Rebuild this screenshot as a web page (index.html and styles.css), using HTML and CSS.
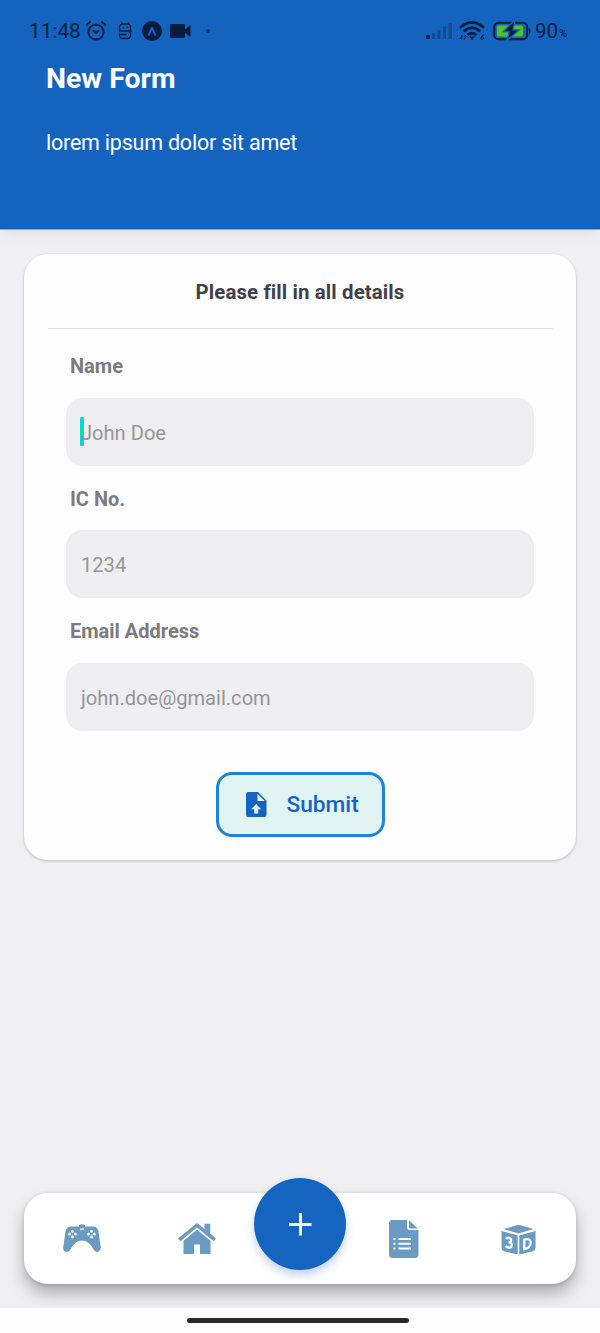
FILE: index.html
```html
<!DOCTYPE html>
<html lang="en">
<head>
<meta charset="utf-8">
<title>New Form</title>
<link rel="stylesheet" href="styles.css">
</head>
<body>
<div class="screen">
  <header class="header">
    <div class="status">
      <div class="status-left">
        <span class="clock">11:48</span>
        <svg class="alarm" width="22" height="22" viewBox="0 0 22 22" fill="none" stroke="currentColor" stroke-width="2"><circle cx="11" cy="12" r="7.6"/><path d="M7.8 10.2l3.2 2.8 3.2-2.8M1.2 5.2l4.3-3.7M20.8 5.2l-4.3-3.7"/></svg>
        <svg class="ess" width="14" height="18" viewBox="0 0 14 18" fill="none" stroke="currentColor" stroke-width="1.300"><path d="M12.500 8V5Q12.500 2 9.500 2h-5Q1.500 2 1.500 5.500T4.500 9h5q3.200 0 3.200 3.700T9 16.500H5Q1.500 16.500 1.300 13.500M1 8.800h12.500M3.500 2V.5M10.500 2V.5M4.800 5.500H6M8.500 5.500h1.200M1 12.500h7.500"/></svg>
        <svg class="expo" width="20" height="20" viewBox="0 0 20 20"><circle cx="10" cy="10" r="10" fill="currentColor"/><path d="M5.600 14.200L9 6.400Q10 5 11 6.400l3.400 7.800q-1.400 1.200-2.200-.4L10 9.600l-2.200 4.200q-.8 1.600-2.200.4z" fill="#1765bf"/></svg>
        <svg class="video" width="21" height="14" viewBox="0 0 21 14" fill="currentColor"><rect width="15" height="14" rx="1"/><path d="M14 6l6.500-5v12L14 8z"/></svg>
        <span class="dot"></span>
      </div>
      <div class="status-right">
        <svg class="signal" width="27" height="18" viewBox="0 0 27 18"><rect y="13" width="4" height="4" rx="1" fill="#09254b"/><path d="M6 11h3v6H6zM11.500 8h3v9h-3zM17 4.500h3V17h-3zM22.500 1h3.500v16h-3.500z" fill="#124b91"/></svg>
        <svg class="wifi" width="26" height="20" viewBox="0 0 26 20" fill="none" stroke="currentColor" stroke-width="2.500"><path d="M1 6.700Q13-4 25 6.700M4.800 10.500Q13 3.100 21.200 10.500M8.500 14q4.500-3.800 9 0"/><path d="M10.300 15.500h5.400L13 19z" fill="currentColor" stroke="none"/><path d="M2.800 14v4.500M1 16.800l1.800 1.700M6 18.500V14M6 14l1.800 1.700M24.500 14.200q-2.500.3-2.500 2.800v1.200h2.300v-2H22" stroke-width="1"/></svg>
        <svg class="battery" width="38" height="20" viewBox="0 0 38 20"><rect x="1.200" y="1.700" width="33" height="16.600" rx="4.500" fill="none" stroke="currentColor" stroke-width="2"/><rect x="4" y="4.500" width="26" height="11" rx="1.500" fill="#52c41b"/><path d="M35.800 7q1.700 0 1.700 3t-1.700 3z" fill="currentColor"/><path d="M20.500.5L10 10.800h6.200L14 19.500 26.500 8.800h-6.500L22 .5z" fill="currentColor" stroke="#1765bf" stroke-width="1.300"/></svg>
        <span class="level">90</span><span class="percent">%</span>
      </div>
    </div>
    <h1 class="title">New Form</h1>
    <p class="subtitle">lorem ipsum dolor sit amet</p>
  </header>
  <main class="content">
    <form class="card">
      <h2 class="card-title">Please fill in all details</h2>
      <div class="fields">
        <div class="label">Name</div>
        <div class="field focused"><span class="hint">John Doe</span></div>
        <div class="label">IC No.</div>
        <div class="field"><span class="hint">1234</span></div>
        <div class="label">Email Address</div>
        <div class="field"><span class="hint">john.doe@gmail.com</span></div>
      </div>
      <button class="submit" type="button">
        <svg width="21" height="25" viewBox="0 0 21 25"><path d="M2.500 0H12l8.500 8.500V22.500a2.500 2.500 0 0 1-2.500 2.500H2.500A2.500 2.500 0 0 1 0 22.500V2.500A2.500 2.500 0 0 1 2.500 0z" fill="#1565c0"/><path d="M11.500 1.700v7.200h7.200zM10.200 12l5 5.200h-3v4.300h-4v-4.300h-3z" fill="#e2f3f4"/></svg>
        <span class="submit-text">Submit</span>
      </button>
    </form>
  </main>
  <div class="nav-area">
    <nav class="nav">
      <svg class="game" width="38" height="29" viewBox="0 0 38 29"><path d="M8 2.500h8V1q3-1.500 6 0v1.500h8q4.500 0 5.500 5l2.200 15.500q.5 4-2.500 4.800-3 .7-4.700-2.300Q26 16.500 19 16.500T7.500 25.500Q5.800 28.500 2.800 27.800-.2 27 .3 23L2.500 7.500Q3.500 2.500 8 2.500z" fill="#6b9ac2"/><g fill="#fff"><circle cx="9.500" cy="7.500" r="1.400"/><circle cx="9.500" cy="13" r="1.400"/><circle cx="6.700" cy="10.200" r="1.400"/><circle cx="12.300" cy="10.200" r="1.400"/><circle cx="28.500" cy="7.500" r="1.400"/><circle cx="28.500" cy="13" r="1.400"/><circle cx="25.700" cy="10.200" r="1.400"/><circle cx="31.300" cy="10.200" r="1.400"/><path d="M17 4.500h4v1.200h-4z"/></g></svg>
      <svg class="home" width="38" height="32" viewBox="0 0 38 32" fill="#6b9ac2"><path d="M0 15.500L19 0l7.500 6V.8h5.800v9.900l5.700 4.800-2.300 2.700L19 4.500 2.300 18.200z"/><path d="M19 6.800l13.500 11V31H22V21.500h-6V31H5.500V17.800z"/></svg>
      <div class="fab"><svg width="24" height="24" viewBox="0 0 24 24"><path d="M12.500 1v22.500M1 12.500h22.500" stroke="#fff" stroke-width="3"/></svg></div>
      <svg class="doc" width="30" height="38" viewBox="0 0 30 38"><path d="M3.500 0H18v7.500Q18 10 20.500 10H29.500V34.500a3.500 3.500 0 0 1-3.500 3.500H3.500A3.500 3.500 0 0 1 0 34.500v-31A3.500 3.500 0 0 1 3.500 0zM20 .3L28.800 8.500H21Q20 8.500 20 7.500z" fill="#6b9ac2"/><path d="M9.500 19H22M9.500 23.700H22M9.500 28.500H22M4.500 19h2M4.500 23.700h2M4.500 28.500h2" stroke="#fff" stroke-width="2"/></svg>
      <svg class="cube" width="35" height="31" viewBox="0 0 35 31"><path d="M17.500.7L32.500 5 17.500 9.500 2.500 5zM.5 7L16.700 11.500V30.500L3 27.200Q.5 26.500.5 24zM34.500 7L18.300 11.500V30.500L32 27.200Q34.500 26.500 34.500 24z" fill="#6b9ac2"/><g fill="none" stroke="#fff" stroke-width="2.300"><path d="M5 15Q6.500 13 8.800 14q2.800 2 0 4.500H7.500M8.800 18.500q3.500 1.500 1.300 4.500-2.300 1.800-5.600-.8M23.300 15.600V25.200Q29.500 23.800 29.700 18.500 29.500 13.800 23.300 15.600z"/></g></svg>
    </nav>
  </div>
  <div class="gesture"><span class="pill"></span></div>
</div>
</body>
</html>
```
FILE: styles.css
```css
* { box-sizing: border-box; }
body { margin: 0; font-family: Roboto, "Liberation Sans", sans-serif; }
.screen { width: 600px; height: 1333px; display: flex; flex-direction: column; background: #f0eff1; overflow: hidden; }
svg { display: block; flex: none; }
.header { height: 230px; flex: none; background: #1463bf; color: #fff; border-bottom: 1px solid #76b2ee; box-shadow: 0 3px 12px #dedde2; }
.status { height: 62px; padding: 0 32px 0 29px; display: flex; justify-content: space-between; align-items: center; color: #061c3d; }
.status-left, .status-right { display: flex; align-items: center; }
.clock { width: 56px; font-size: 20.800px; line-height: 24px; white-space: nowrap; }
.ess { margin-left: 11px; }
.expo { margin-left: 10px; }
.video { margin-left: 8px; }
.dot { width: 4px; height: 4px; margin-left: 15px; border-radius: 50%; background: #092d5d; }
.wifi { margin-left: 6px; }
.battery { margin-left: 8px; }
.level { width: 24px; margin-left: 4px; font-size: 20.500px; line-height: 24px; }
.percent { width: 9px; font-size: 11px; line-height: 12px; transform: translateY(3px); }
.title { margin: 0 0 0 46px; font-size: 28.400px; line-height: 34px; font-weight: 700; }
.subtitle { margin: 34px 0 0 46px; font-size: 21.500px; line-height: 26px; letter-spacing: -.22px; }
.content { flex: 1; padding: 24px 24px 0; }
.card { height: 606px; display: flex; flex-direction: column; align-items: center; padding: 0 24px; border-radius: 24px; background: #fefdff; box-shadow: 0 1px 2px 1px #d1d0d4; }
.card-title { width: 505px; height: 75px; margin: 0; padding-top: 25px; border-bottom: 1px solid #dcdce1; font-size: 20.400px; letter-spacing: .12px; line-height: 26px; font-weight: 700; text-align: center; color: #414145; }
.fields { width: 468px; padding-top: 16px; }
.label { padding-left: 4px; height: 52.500px; padding-top: 8px; font-size: 20px; line-height: 26px; font-weight: 700; color: #7c7b7e; }
.field { height: 68px; margin-bottom: 12px; padding: 2px 0 0 15px; display: flex; align-items: center; border-radius: 16px; background: #efeef0; font-size: 20.100px; color: #969598; position: relative; }
.focused::before { content: ""; position: absolute; left: 14px; top: 19px; width: 4px; height: 29px; background: #08dac9; border-radius: 1px; }
.hint { position: relative; }
.submit { width: 169px; height: 65px; margin-top: 29px; padding: 0 0 0 27px; display: flex; align-items: center; gap: 20px; border: 3px solid #1f83da; border-radius: 16px; background: #e2f3f4; font-family: inherit; color: #1565c0; }
.submit-text { font-size: 22.700px; font-weight: 500; line-height: 28px; padding-top: 2px; }
.nav-area { height: 116px; flex: none; padding: 1px 24px 0; }
.nav { height: 91px; display: flex; align-items: center; padding-left: 39px; border-radius: 24px; background: #fff; box-shadow: 0 10px 16px rgba(0,0,0,.27), 0 1px 4px rgba(0,0,0,.14); }
.home { margin-left: 77px; }
.fab { width: 92px; height: 92px; flex: none; margin: -30px 0 0 38px; display: flex; align-items: center; justify-content: center; border-radius: 50%; background: #1565c0; box-shadow: 0 5px 8px rgba(40,90,210,.28); }
.doc { margin-left: 43px; }
.cube { margin: 2px 0 0 82px; }
.gesture { height: 25px; flex: none; display: flex; align-items: center; justify-content: center; background: #fefdff; position: relative; }
.pill { width: 222px; height: 5px; margin-right: 4px; border-radius: 3px; background: #29292a; }
```
